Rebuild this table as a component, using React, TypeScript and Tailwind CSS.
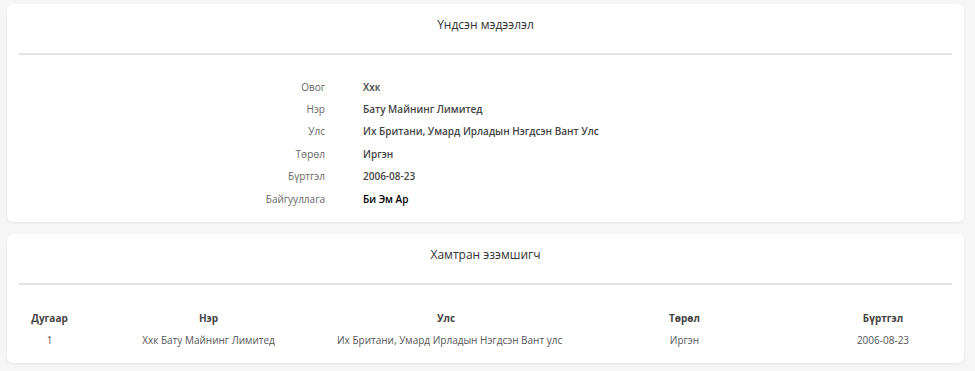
import React from 'react';

const info = [
  { label: 'Овог', value: 'Ххк' },
  { label: 'Нэр', value: 'Бату Майнинг Лимитед' },
  { label: 'Улс', value: 'Их Британи, Умард Ирладын Нэгдсэн Вант Улс' },
  { label: 'Төрөл', value: 'Иргэн' },
  { label: 'Бүртгэл', value: '2006-08-23' },
  { label: 'Байгууллага', value: 'Би Эм Ар', strong: true },
];

const owners = [
  { no: '1', name: 'Ххк Бату Майнинг Лимитед', country: 'Их Британи, Умард Ирладын Нэгдсэн Вант улс', type: 'Иргэн', date: '2006-08-23' },
];

const cols = 'grid grid-cols-[61px_257px_218px_259px_138px] text-center';

const CardHeader: React.FC<{ title: string }> = ({ title }) => (
  <>
    <div className="h-[42px] flex items-center justify-center text-[12px] text-[#333]">{title}</div>
    <div className="mx-3 mt-[7px] h-[2px] bg-[#e4e4e4]" />
  </>
);

export default function App() {
  return (
    <div className="w-[975px] h-[371px] bg-[#f6f6f6] pt-1 pl-[7px] pr-[11px] font-['Open_Sans',sans-serif] overflow-hidden">
      {/* Basic info */}
      <div className="bg-white rounded-md shadow-[0_1px_3px_rgba(0,0,0,0.08)] pb-3">
        <CardHeader title="Үндсэн мэдээлэл" />
        <div className="mt-[21px]">
          {info.map((row) => (
            <div key={row.label} className="flex items-center h-[22.4px] text-[10px]">
              <div className="w-[318px] text-right text-[#666]">{row.label}</div>
              <div className={`pl-[38px] font-semibold ${row.strong ? 'text-black font-bold' : 'text-[#444]'}`}>{row.value}</div>
            </div>
          ))}
        </div>
      </div>

      {/* Co-owners */}
      <div className="mt-[12px] bg-white rounded-md shadow-[0_1px_3px_rgba(0,0,0,0.08)] pb-3">
        <CardHeader title="Хамтран эзэмшигч" />
        <div className="mx-3 mt-[22px] text-[10px]">
          <div className={`${cols} h-[22px] items-center font-bold text-[#444]`}>
            <div>Дугаар</div>
            <div>Нэр</div>
            <div>Улс</div>
            <div>Төрөл</div>
            <div>Бүртгэл</div>
          </div>
          {owners.map((o) => (
            <div key={o.no} className={`${cols} h-[22px] items-center text-[#555]`}>
              <div>{o.no}</div>
              <div>{o.name}</div>
              <div className="whitespace-nowrap">{o.country}</div>
              <div>{o.type}</div>
              <div>{o.date}</div>
            </div>
          ))}
        </div>
      </div>
    </div>
  );
}
